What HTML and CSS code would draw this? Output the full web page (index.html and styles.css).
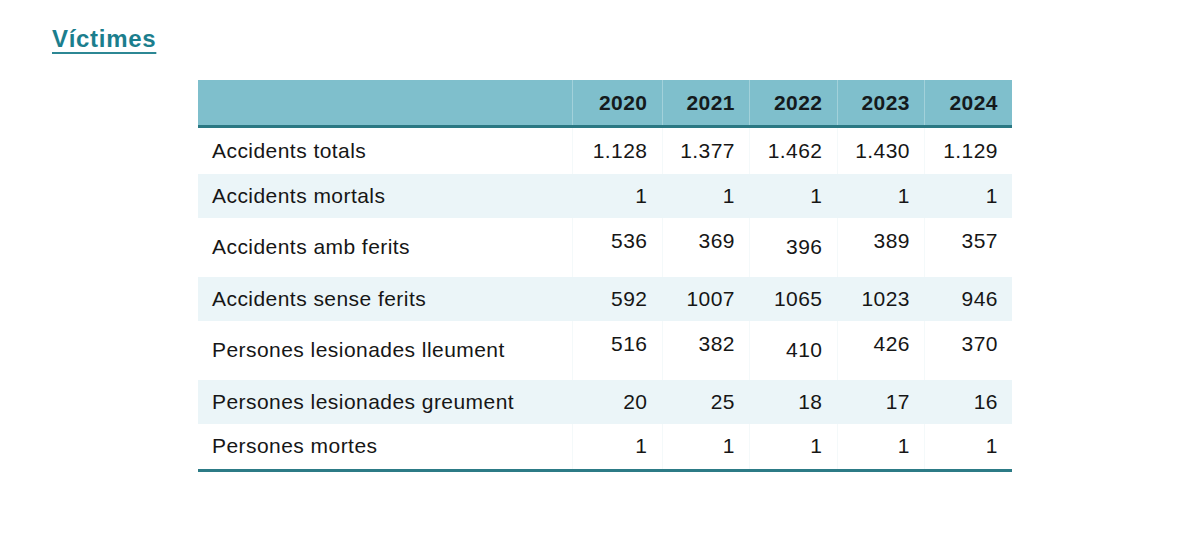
FILE: index.html
```html
<!DOCTYPE html>
<html lang="ca">
<head>
<meta charset="utf-8">
<title>Víctimes</title>
<link rel="stylesheet" href="styles.css">
</head>
<body>
<main class="page">
  <h1 class="title">Víctimes</h1>
  <table class="stats">
    <colgroup>
      <col class="c-label">
      <col class="c-y1">
      <col class="c-y">
      <col class="c-y">
      <col class="c-y">
      <col class="c-y">
    </colgroup>
    <thead>
      <tr>
        <th class="h-label"></th>
        <th>2020</th>
        <th>2021</th>
        <th>2022</th>
        <th>2023</th>
        <th>2024</th>
      </tr>
    </thead>
    <tbody>
      <tr class="r-first">
        <td class="lbl">Accidents totals</td>
        <td>1.128</td><td>1.377</td><td>1.462</td><td>1.430</td><td>1.129</td>
      </tr>
      <tr class="r-std alt">
        <td class="lbl">Accidents mortals</td>
        <td>1</td><td>1</td><td>1</td><td>1</td><td>1</td>
      </tr>
      <tr class="r-tall">
        <td class="lbl">Accidents amb ferits</td>
        <td class="hi">536</td><td class="hi">369</td><td>396</td><td class="hi">389</td><td class="hi">357</td>
      </tr>
      <tr class="r-std alt">
        <td class="lbl">Accidents sense ferits</td>
        <td>592</td><td>1007</td><td>1065</td><td>1023</td><td>946</td>
      </tr>
      <tr class="r-tall">
        <td class="lbl">Persones lesionades lleument</td>
        <td class="hi">516</td><td class="hi">382</td><td>410</td><td class="hi">426</td><td class="hi">370</td>
      </tr>
      <tr class="r-std alt">
        <td class="lbl">Persones lesionades greument</td>
        <td>20</td><td>25</td><td>18</td><td>17</td><td>16</td>
      </tr>
      <tr class="r-last">
        <td class="lbl">Persones mortes</td>
        <td>1</td><td>1</td><td>1</td><td>1</td><td>1</td>
      </tr>
    </tbody>
  </table>
</main>
</body>
</html>
```

FILE: styles.css
```css
html, body {
  margin: 0;
  padding: 0;
  background: #ffffff;
}

.page {
  padding: 24px 0 0 52px;
  font-family: "Liberation Sans", Arial, sans-serif;
  color: #161616;
}

.title {
  margin: 0;
  font-size: 24px;
  line-height: 30px;
  font-weight: 700;
  letter-spacing: 0.7px;
  color: #1b7e8d;
  display: inline-block;
  text-decoration: underline;
  text-decoration-color: #2c8794;
  text-decoration-thickness: 2px;
  text-underline-offset: 5px;
}

.stats {
  margin: 26px 0 0 146px;
  border-collapse: collapse;
  table-layout: fixed;
  width: 814px;
  font-size: 21px;
  letter-spacing: 0.45px;
}

.c-label { width: 374px; }
.c-y1 { width: 90px; }
.c-y { width: 87.5px; }

.stats th {
  height: 45px;
  padding: 0 14px 0 0;
  background: #7fbfcc;
  color: #141a1c;
  font-weight: 700;
  text-align: right;
  vertical-align: middle;
  border-left: 1px solid #a2d1da;
  border-bottom: 3px solid #2a7883;
}

.stats th.h-label {
  border-left: none;
}

.stats td {
  padding: 0 14px 0 0;
  text-align: right;
  vertical-align: middle;
  border-left: 1px solid #f4f9fa;
  white-space: nowrap;
}

.stats td.lbl {
  text-align: left;
  padding: 0 0 0 14px;
  border-left: none;
}

.stats td.hi {
  padding-bottom: 12px;
}

.r-first { height: 47px; }
.r-std { height: 44px; }
.r-tall { height: 59px; }
.r-last { height: 47px; }

.alt td {
  background: #ebf5f8;
  border-left-color: #ebf5f8;
}

.r-last td {
  border-bottom: 3px solid #2c7b86;
}
```
